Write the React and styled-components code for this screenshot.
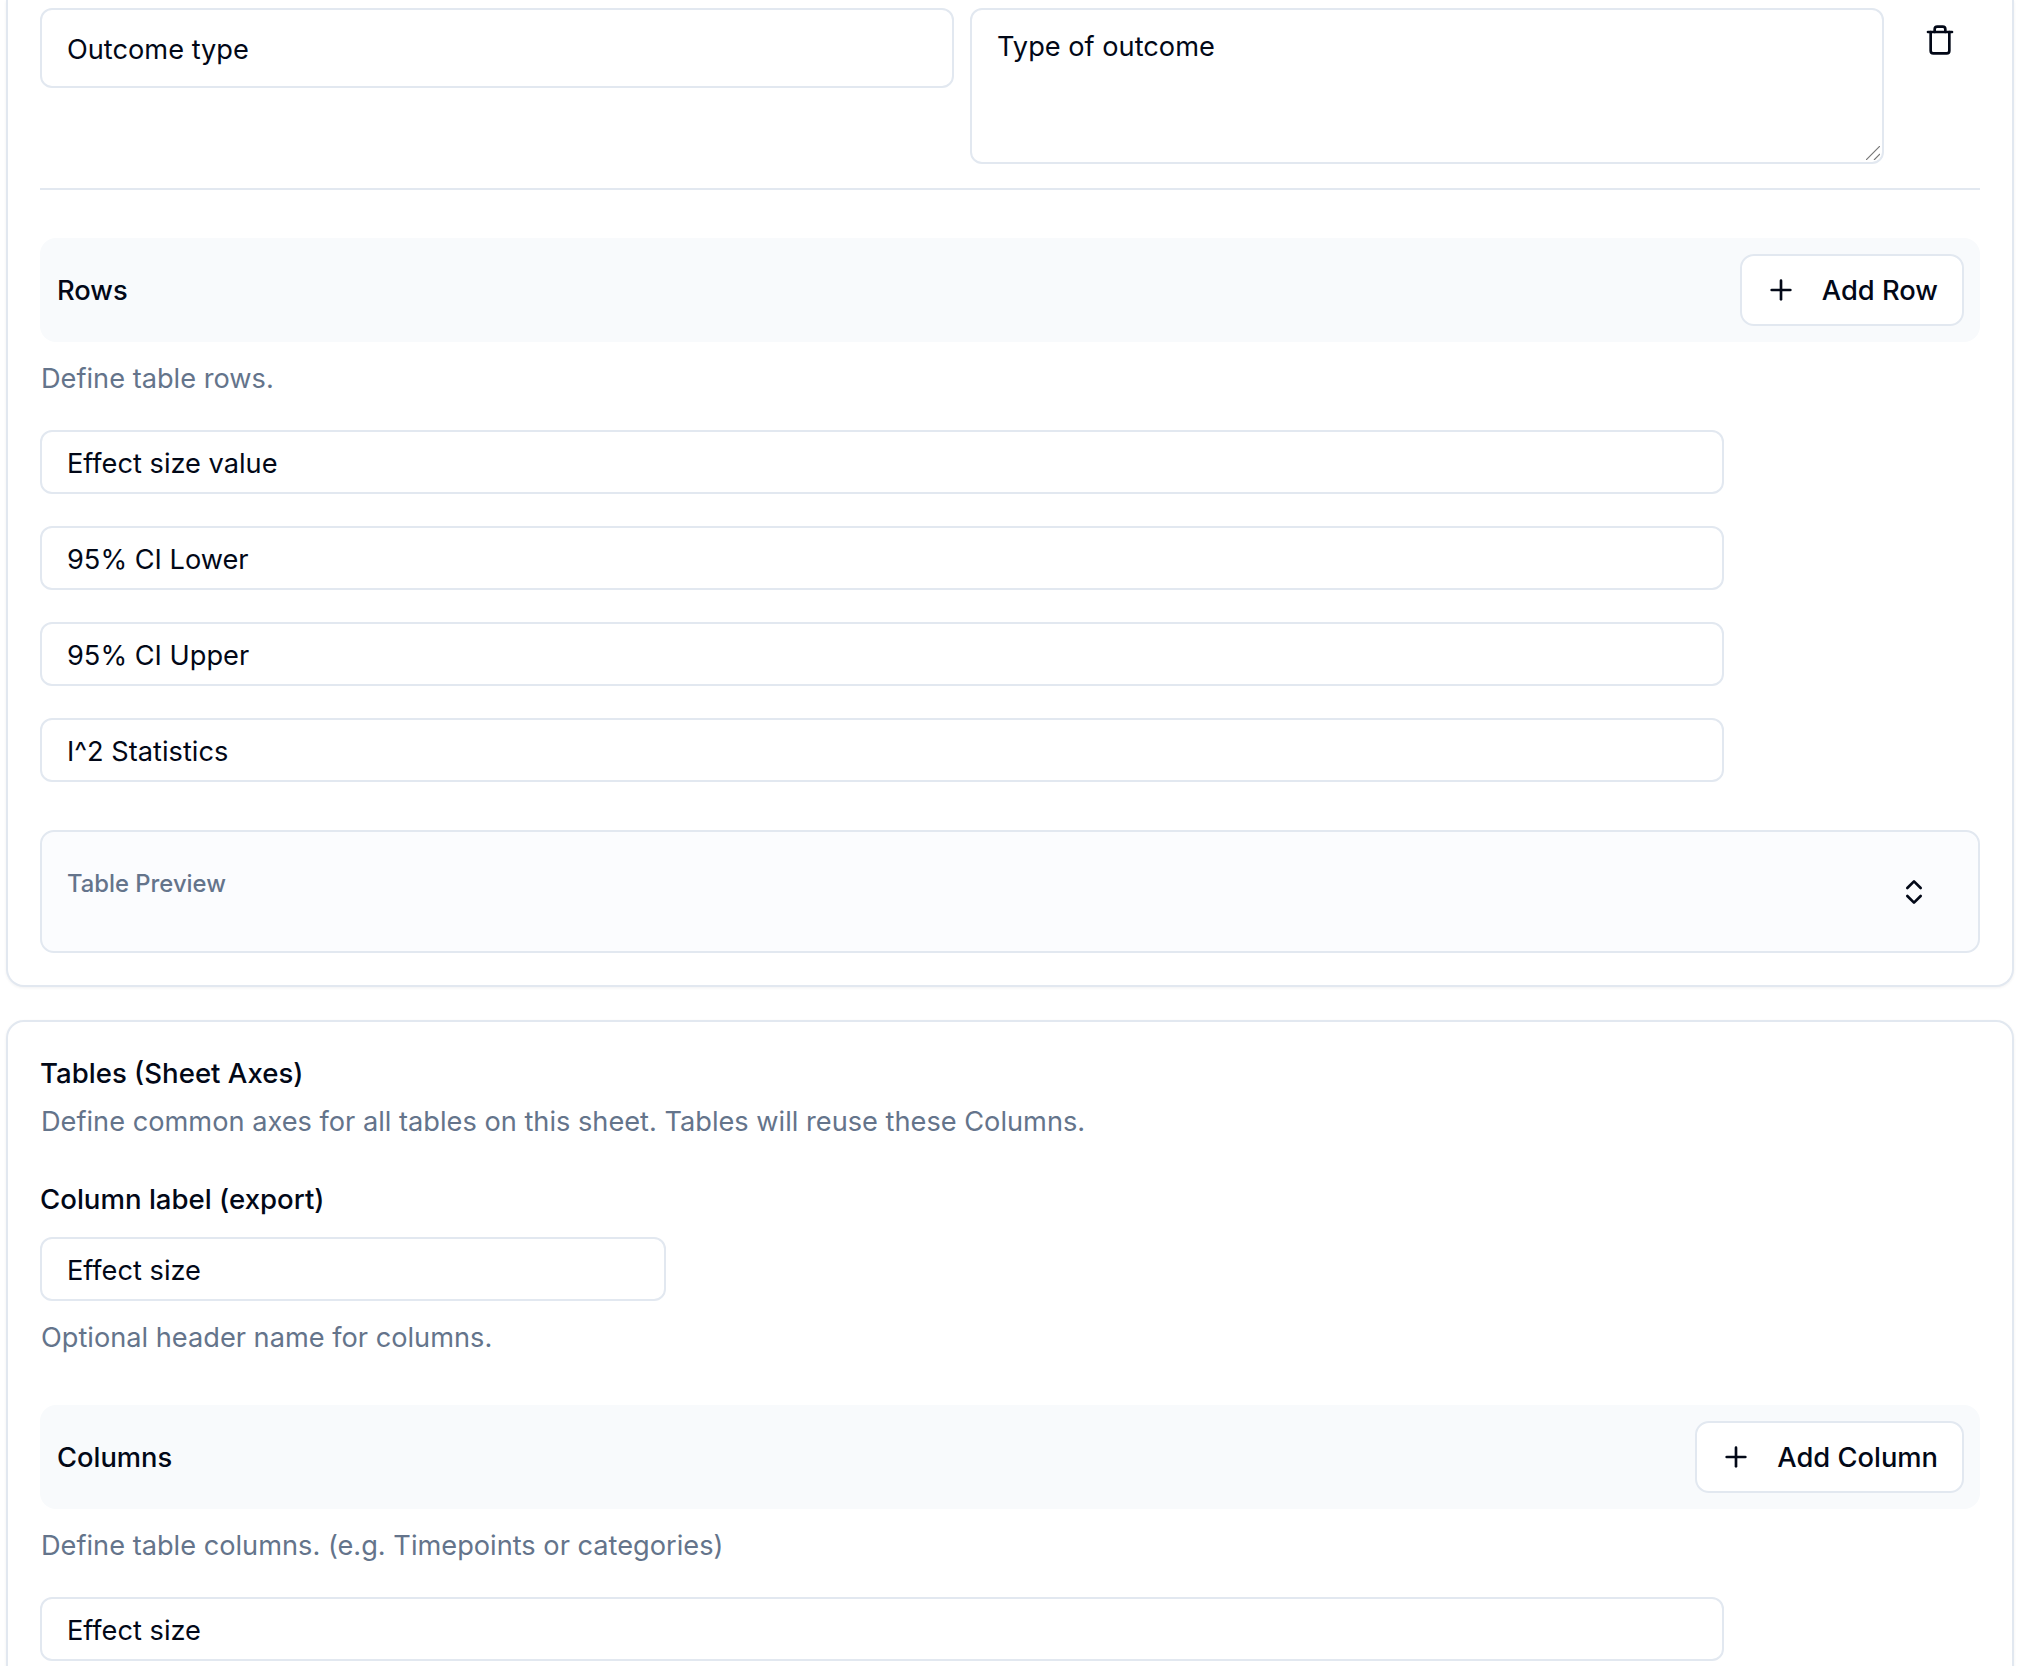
import React from 'react';
import styled, { createGlobalStyle } from 'styled-components';
import { Plus, Trash, ChevronsUpDown } from 'lucide-react';

const GlobalStyle = createGlobalStyle`
  html, body {
    margin: 0;
    background: #fff;
    height: 1666px;
    overflow: hidden;
  }
  * {
    box-sizing: border-box;
  }
  body {
    font-family: Inter, "Noto Sans", sans-serif;
    color: #020817;
  }
`;

const Page = styled.div`
  padding: 0 4px 0 6px;
  display: flex;
  flex-direction: column;
  gap: 33px;
`;

const Card = styled.section`
  border: 2px solid #e2e8f0;
  border-top-width: ${(props) => (props.cut ? '0' : '2px')};
  border-radius: ${(props) => (props.cut ? '0 0 18px 18px' : '18px')};
  padding: ${(props) => (props.cut ? '8px' : '33px')} 32px 32px;
  box-shadow: 0 1px 3px rgba(15, 23, 42, 0.06);
  background: #fff;
`;

const TopRow = styled.div`
  display: grid;
  grid-template-columns: 914px 914px 1fr;
  gap: 16px;
  padding-bottom: 24px;
  border-bottom: 2px solid #e2e8f0;
  align-items: start;
`;

const Field = styled.input`
  display: block;
  width: ${(props) => props.width || '100%'};
  height: ${(props) => props.height || '64px'};
  border: 2px solid #e2e8f0;
  border-radius: 12px;
  padding: 2px 25px 0;
  font: 400 27.2px Inter, sans-serif;
  color: #020817;
  background: #fff;
  outline: none;
`;

const AreaWrap = styled.div`
  position: relative;
`;

const Area = styled.textarea`
  display: block;
  width: 100%;
  height: 156px;
  border: 2px solid #e2e8f0;
  border-radius: 12px;
  padding: 19px 25px;
  font: 400 27.2px/36px Inter, sans-serif;
  color: #020817;
  background: #fff;
  outline: none;
  resize: none;
`;

const Grip = styled.svg`
  position: absolute;
  right: 4px;
  bottom: 4px;
  width: 14px;
  height: 14px;
`;

const IconSlot = styled.div`
  display: flex;
  justify-content: center;
  padding-top: 16px;
`;

const SectionBar = styled.div`
  display: flex;
  align-items: center;
  justify-content: space-between;
  height: 104px;
  padding: 0 16px 0 17px;
  margin-top: ${(props) => props.top || '48px'};
  background: #f8fafc;
  border-radius: 16px;
`;

const BarTitle = styled.div`
  font-size: 27.3px;
  font-weight: 500;
`;

const AddButton = styled.button`
  display: flex;
  align-items: center;
  gap: 25px;
  height: 72px;
  padding: 0 24px 0 23px;
  border: 2px solid #e2e8f0;
  border-radius: 14px;
  background: #fff;
  color: #020817;
  font: 500 27.3px Inter, sans-serif;
`;

const Help = styled.p`
  margin: ${(props) => props.top || '19px'} 0 -1px 1px;
  font-size: 27.2px;
  line-height: 36px;
  color: #64748b;
`;

const RowList = styled.div`
  display: flex;
  flex-direction: column;
  gap: 32px;
  width: 1684px;
  margin-top: ${(props) => props.top || '34px'};
`;

const Preview = styled.div`
  display: flex;
  justify-content: space-between;
  align-items: center;
  height: 123px;
  margin-top: 48px;
  padding: 0 48px 0 25px;
  background: #fbfcfe;
  border: 2px solid #e2e8f0;
  border-radius: 14px;
`;

const PreviewLabel = styled.div`
  font-size: 23.8px;
  font-weight: 500;
  color: #64748b;
  margin-bottom: 16px;
`;

const Heading = styled.h3`
  margin: 0;
  font-size: 27.6px;
  line-height: 36px;
  font-weight: 500;
`;

const Label = styled.label`
  display: block;
  margin: 42px 0 20px;
  font-size: 27.6px;
  line-height: 36px;
  font-weight: 500;
`;

const rows = ['Effect size value', '95% CI Lower', '95% CI Upper', 'I^2 Statistics'];

export default function App() {
  return (
    <Page>
      <GlobalStyle />
      <Card cut>
        <TopRow>
          <Field height="80px" defaultValue="Outcome type" />
          <AreaWrap>
            <Area defaultValue="Type of outcome" />
            <Grip viewBox="0 0 14 14" stroke="#777" strokeWidth="1.2">
              <path d="M0 14 14 0M8 14l6-6" />
            </Grip>
          </AreaWrap>
          <IconSlot>
            <Trash size={32} strokeWidth={2} />
          </IconSlot>
        </TopRow>
        <SectionBar>
          <BarTitle>Rows</BarTitle>
          <AddButton>
            <Plus size={32} strokeWidth={2} />
            Add Row
          </AddButton>
        </SectionBar>
        <Help>Define table rows.</Help>
        <RowList>
          {rows.map((r) => (
            <Field key={r} defaultValue={r} />
          ))}
        </RowList>
        <Preview>
          <PreviewLabel>Table Preview</PreviewLabel>
          <ChevronsUpDown size={32} strokeWidth={2} />
        </Preview>
      </Card>
      <Card>
        <Heading>Tables (Sheet Axes)</Heading>
        <Help top="13px">Define common axes for all tables on this sheet. Tables will reuse these Columns.</Help>
        <Label>Column label (export)</Label>
        <Field width="626px" defaultValue="Effect size" />
        <Help>Optional header name for columns.</Help>
        <SectionBar top="50px">
          <BarTitle>Columns</BarTitle>
          <AddButton>
            <Plus size={32} strokeWidth={2} />
            Add Column
          </AddButton>
        </SectionBar>
        <Help>Define table columns. (e.g. Timepoints or categories)</Help>
        <RowList top="34px">
          <Field defaultValue="Effect size" />
        </RowList>
      </Card>
    </Page>
  );
}
